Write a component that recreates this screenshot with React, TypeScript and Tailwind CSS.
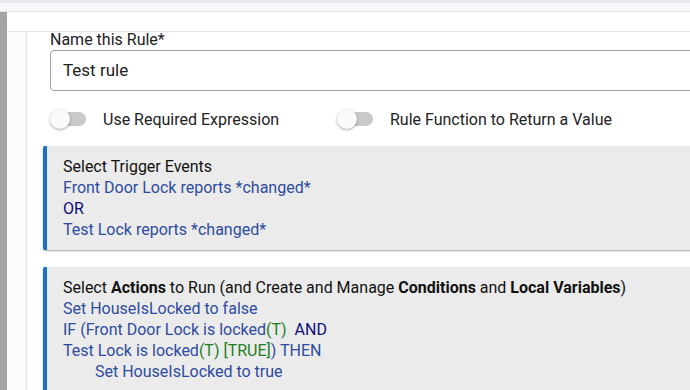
import React from 'react'

function Toggle({ label }: { label: string }) {
    return (
        <div className="flex items-center">
            <div className="relative w-[38px] h-[20px] flex items-center shrink-0">
                <div className="ml-[2px] w-[34px] h-[14px] rounded-full bg-[#c9c9c9]" />
                <div className="absolute left-0 top-0 w-[20px] h-[20px] rounded-full bg-[#fafafa] shadow-[0_1px_3px_rgba(0,0,0,0.35)]" />
            </div>
            <span className="ml-[15px] text-[16px] text-[#222] whitespace-nowrap">{label}</span>
        </div>
    )
}

const blue = 'text-[#2d4c9f]'
const green = 'text-[#1f7d1f]'
const navy = 'text-[#0d0d7a]'

export default function App() {
    return (
        <div className="w-[690px] h-[390px] overflow-hidden bg-white font-['Roboto',sans-serif] text-[16px] leading-[21px]">
            <div className="h-[3px] bg-[#e7e7ef]" />
            <div className="h-[8px] bg-[#f6f6fb]" />
            <div className="h-px bg-[#e3e3ea]" />
            <div className="flex h-[378px]">
                <div className="w-[7px] shrink-0 bg-[#a4a4a4]" />
                <div className="flex-1 flex flex-col min-w-0">
                    <div className="h-[20px] shrink-0 bg-white border-b border-[#e6e6ec]" />
                    <div className="flex flex-1">
                        <div className="w-[20px] shrink-0 bg-[#fbfbfb] border-r border-[#e4e4e4]" />
                        <div className="flex-1 pl-[16px] min-w-0">
                            <div className="pl-[7px]">
                                <div className="text-[16px] leading-[16px] text-[#222]">Name this Rule*</div>
                                <div className="mt-[2px] h-[41px] w-[700px] border border-[#a3a3a3] rounded-[4px] flex items-center pl-[12px] text-[17px] text-[#222]">
                                    Test rule
                                </div>
                                <div className="flex mt-[18px] h-[20px] items-center">
                                    <div className="w-[287px] shrink-0">
                                        <Toggle label="Use Required Expression" />
                                    </div>
                                    <Toggle label="Rule Function to Return a Value" />
                                </div>
                            </div>

                            <div className="mt-[17px] w-[700px] bg-[#ebebeb] border-l-4 border-[#1a73c9] rounded-l-[2px] pl-[16px] pt-[10px] pb-[10px] shadow-[0_1px_2px_rgba(0,0,0,0.35)]">
                                <div className="text-[#111]">Select Trigger Events</div>
                                <div className={blue}>Front Door Lock reports *changed*</div>
                                <div className={navy}>OR</div>
                                <div className={blue}>Test Lock reports *changed*</div>
                            </div>

                            <div className="mt-[17px] w-[700px] bg-[#ebebeb] border-l-4 border-[#1a73c9] rounded-l-[2px] pl-[16px] pt-[10px] pb-[10px] shadow-[0_1px_2px_rgba(0,0,0,0.35)]">
                                <div className="text-[#111] whitespace-nowrap">
                                    Select <b className="font-bold">Actions</b> to Run (and Create and Manage <b className="font-bold">Conditions</b> and <b className="font-bold">Local Variables</b>)
                                </div>
                                <div className={blue}>Set HouseIsLocked to false</div>
                                <div className={blue}>
                                    IF (Front Door Lock is locked<span className={green}>(T)</span>&nbsp; <span className={navy}>AND</span>
                                </div>
                                <div className={blue}>
                                    Test Lock is locked<span className={green}>(T) [TRUE]</span>) THEN
                                </div>
                                <div className={`${blue} pl-[32px]`}>Set HouseIsLocked to true</div>
                            </div>
                        </div>
                    </div>
                </div>
            </div>
        </div>
    )
}
